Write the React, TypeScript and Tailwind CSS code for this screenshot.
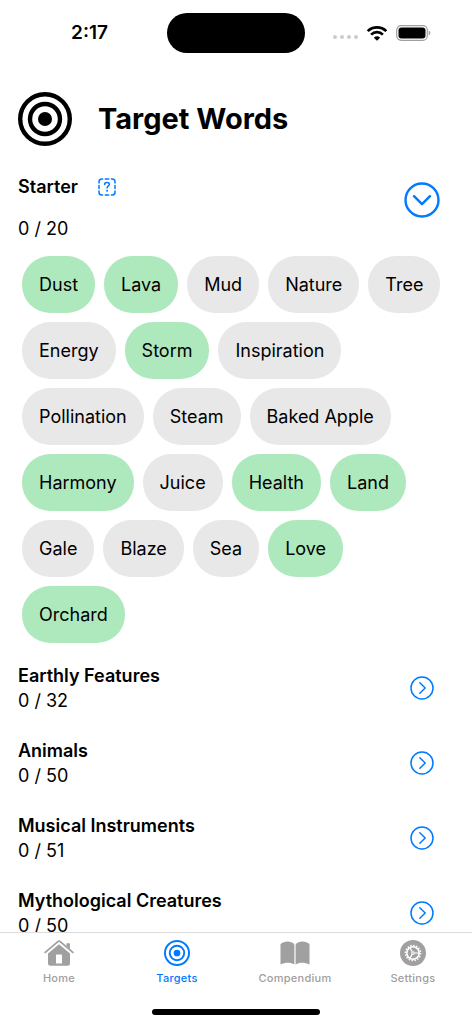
import React, { useState } from 'react';

type Word = {
  text: string;
  found?: boolean;
};

interface Category {
  name: string;
  total: number;
}

const starterWords: Word[] = [
  { text: 'Dust', found: true },
  { text: 'Lava', found: true },
  { text: 'Mud' },
  { text: 'Nature' },
  { text: 'Tree' },
  { text: 'Energy' },
  { text: 'Storm', found: true },
  { text: 'Inspiration' },
  { text: 'Pollination' },
  { text: 'Steam' },
  { text: 'Baked Apple' },
  { text: 'Harmony', found: true },
  { text: 'Juice' },
  { text: 'Health', found: true },
  { text: 'Land', found: true },
  { text: 'Gale' },
  { text: 'Blaze' },
  { text: 'Sea' },
  { text: 'Love', found: true },
  { text: 'Orchard', found: true },
];

const categories: Category[] = [
  { name: 'Earthly Features', total: 32 },
  { name: 'Animals', total: 50 },
  { name: 'Musical Instruments', total: 51 },
  { name: 'Mythological Creatures', total: 50 },
];

const TargetIcon = ({ className = '', thin = false }: { className?: string; thin?: boolean }) => (
  <svg viewBox="0 0 54 54" className={className} fill="none" stroke="currentColor" aria-hidden="true">
    <circle cx="27" cy="27" r={thin ? 25 : 24.8} strokeWidth={thin ? 4 : 4.4} />
    <circle cx="27" cy="27" r="15" strokeWidth={thin ? 4 : 4.4} />
    <circle cx="27" cy="27" r="7" fill="currentColor" stroke="none" />
  </svg>
);

const HelpIcon = () => (
  <svg viewBox="0 0 18 18" className="size-[18px]" fill="none" stroke="currentColor" strokeWidth="1.5" strokeLinecap="round" aria-hidden="true">
    <path d="M1 5V3.8A2.8 2.8 0 0 1 3.8 1H4.6M13.4 1h.8A2.8 2.8 0 0 1 17 3.8V5M17 13v1.2a2.8 2.8 0 0 1-2.8 2.8h-.8M4.6 17h-.8A2.8 2.8 0 0 1 1 14.2V13" />
    <path d="M7.3 1h3.4M7.3 17h3.4M1 7.5v3M17 7.5v3" />
    <path d="M6.6 6.4c0-1.300 1-2 2.400-2s2.400.8 2.400 2c0 1.500-2.300 1.600-2.300 3.500" />
    <circle cx="9.100" cy="12.800" r="1" fill="currentColor" stroke="none" />
  </svg>
);

const HomeIcon = () => (
  <svg viewBox="0 0 30 28" className="h-7 w-[30px]" aria-hidden="true">
    <path d="M1.2 13.4 13.9 2.6a1.8 1.8 0 0 1 2.3 0L28.8 13.4" fill="none" stroke="currentColor" strokeWidth="1.8" strokeLinecap="round" />
    <path d="M23 4.2h2.4q.5 0 .5.5V10L22.5 7V4.700q0-.5.5-.5Z" fill="currentColor" />
    <path
      d="M15 5.200 26 14.600V24.200a2.500 2.500 0 0 1-2.500 2.500H6.500A2.500 2.500 0 0 1 4 24.200V14.600ZM12.600 15.500a.6.6 0 0 0-.6.6V24.600H18V16.100a.6.6 0 0 0-.6-.6Z"
      fill="currentColor"
      fillRule="evenodd"
    />
  </svg>
);

const BookIcon = () => (
  <svg viewBox="0 0 30 28" className="h-7 w-[30px]" fill="currentColor" aria-hidden="true">
    <path d="M14.400 25.400V5.400C12.900 3.300 10.200 2.500 7.600 2.500S2 3.400.5 5.300V24.600q0 1.200 1 .6C5 23.300 10.500 23 14.400 25.400Z" />
    <path d="M15.600 25.400V5.400C17.100 3.300 19.800 2.500 22.400 2.500S28 3.400 29.500 5.300V24.600q0 1.200-1 .6C25 23.300 19.500 23 15.600 25.400Z" />
  </svg>
);

const SettingsIcon = () => (
  <svg viewBox="0 0 28 28" className="size-7" aria-hidden="true">
    <circle cx="14" cy="14" r="13" fill="currentColor" />
    <g fill="none" stroke="#fff">
      <circle cx="14" cy="14" r="7.6" strokeWidth="1.4" strokeDasharray="1.500 1.480" />
      <circle cx="14" cy="14" r="6.2" strokeWidth="1.6" />
      <circle cx="14" cy="14" r="1.3" strokeWidth="1.1" />
      <path d="M15.500 14h4.800M13.200 12.700 10.900 8.600M13.200 15.300l-2.300 4.100" strokeWidth="1.200" />
    </g>
  </svg>
);

const WifiIcon = () => (
  <svg viewBox="0 0 22 16" className="h-4 w-[22px]" fill="none" stroke="currentColor" strokeWidth="2.700" aria-hidden="true">
    <path d="M1.700 6.100a13.400 13.400 0 0 1 18.600 0" />
    <path d="M5.100 9.600a8.500 8.500 0 0 1 11.800 0" />
    <path d="M11 15.800 7.900 12.700a4.500 4.500 0 0 1 6.200 0Z" fill="currentColor" stroke="none" />
  </svg>
);

const BatteryIcon = () => (
  <svg viewBox="0 0 35 16" className="h-4 w-[35px]" fill="none" aria-hidden="true">
    <rect x="0.700" y="0.700" width="30.600" height="14.600" rx="4.500" stroke="#a0a0a0" strokeWidth="1.200" />
    <rect x="2.500" y="2.500" width="27" height="11" rx="3" fill="#000" />
    <path d="M32.700 5.500a2.700 2.700 0 0 1 0 5Z" fill="#a0a0a0" />
  </svg>
);

const CircleChevron = ({ open = false }: { open?: boolean }) =>
  open ? (
    <svg viewBox="0 0 36 36" className="size-9" fill="none" stroke="currentColor" strokeWidth="2.400" strokeLinecap="round" strokeLinejoin="round" aria-hidden="true">
      <circle cx="18" cy="18" r="16.500" />
      <path d="m10 14.200 8 8 8-8" />
    </svg>
  ) : (
    <svg viewBox="0 0 24 24" className="size-6" fill="none" stroke="currentColor" strokeWidth="1.500" strokeLinecap="round" strokeLinejoin="round" aria-hidden="true">
      <circle cx="12" cy="12" r="11" />
      <path d="m9.800 6.800 5.400 5.200-5.400 5.200" />
    </svg>
  );

const StatusBar = () => (
  <div className="grid shrink-0 grid-cols-[1fr_138px_1fr] items-center pt-[13px]">
    <div className="pl-3 text-center text-[19px] leading-10 font-semibold">2:17</div>
    <div className="h-10 rounded-full bg-black" />
    <div className="flex items-center justify-end gap-2 pr-[41px]">
      <div className="flex gap-[3px] pt-2">
        <span className="size-1 rounded-full bg-[#cbcbcb]" />
        <span className="size-1 rounded-full bg-[#cbcbcb]" />
        <span className="size-1 rounded-full bg-[#cbcbcb]" />
        <span className="size-1 rounded-full bg-[#cbcbcb]" />
      </div>
      <WifiIcon />
      <BatteryIcon />
    </div>
  </div>
);

const tabs = [
  { label: 'Home', icon: <HomeIcon /> },
  { label: 'Targets', icon: <TargetIcon thin className="m-px size-[26px]" /> },
  { label: 'Compendium', icon: <BookIcon /> },
  { label: 'Settings', icon: <SettingsIcon /> },
];

const App = () => {
  const [open, setOpen] = useState(true);
  const [activeTab, setActiveTab] = useState('Targets');

  return (
    <div className="flex h-dvh flex-col bg-white font-[Inter,sans-serif] text-lg leading-[25px] text-black">
      <StatusBar />

      <main className="min-h-0 flex-1 overflow-y-auto pt-[39px] [scrollbar-width:none]">
        <header className="flex items-center gap-[26px] px-[18px]">
          <TargetIcon className="size-[54px] shrink-0" />
          <h1 className="text-[29px] leading-[54px] font-bold">Target Words</h1>
        </header>

        <section className="pt-7">
          <div className="flex items-start justify-between pr-8 pl-[18px]">
            <div>
              <div className="flex items-center gap-5">
                <h2 className="font-semibold">Starter</h2>
                <button type="button" aria-label="About the starter words" className="text-[#007aff]">
                  <HelpIcon />
                </button>
              </div>
              <p className="pt-[17px]">0 / 20</p>
            </div>
            <button
              type="button"
              aria-label="Toggle starter words"
              aria-expanded={open}
              onClick={() => setOpen(!open)}
              className="pt-2 text-[#007aff]"
            >
              <CircleChevron open />
            </button>
          </div>

          {open && (
            <ul className="flex flex-wrap gap-[9px] pt-[15px] pr-5 pl-[22px]">
              {starterWords.map((word) => (
                <li
                  key={word.text}
                  className={`rounded-[28px] px-[17px] py-4 ${word.found ? 'bg-[#aee9bd]' : 'bg-[#e8e8e8]'}`}
                >
                  {word.text}
                </li>
              ))}
            </ul>
          )}
        </section>

        <div className="flex flex-col gap-[25px] py-5">
          {categories.map((category) => (
            <section key={category.name} className="flex items-center justify-between pr-[38px] pl-[18px]">
              <div>
                <h2 className="font-semibold">{category.name}</h2>
                <p>0 / {category.total}</p>
              </div>
              <button type="button" aria-label={`Show ${category.name}`} className="text-[#007aff]">
                <CircleChevron />
              </button>
            </section>
          ))}
        </div>
      </main>

      <nav className="shrink-0 border-t border-[#dcdcdc] bg-white pt-1.5 pb-[9px]">
        <div className="grid grid-cols-4">
          {tabs.map((tab) => (
            <button
              key={tab.label}
              type="button"
              onClick={() => setActiveTab(tab.label)}
              className={`flex flex-col items-center gap-[3px] text-[11px] leading-4 font-medium tracking-wide ${
                activeTab === tab.label ? 'text-[#007aff]' : 'text-[#a0a0a0]'
              }`}
            >
              {tab.icon}
              {tab.label}
            </button>
          ))}
        </div>
        <div className="mx-auto mt-[23px] h-1.5 w-[168px] rounded-full bg-black" />
      </nav>
    </div>
  );
};

export default App;
